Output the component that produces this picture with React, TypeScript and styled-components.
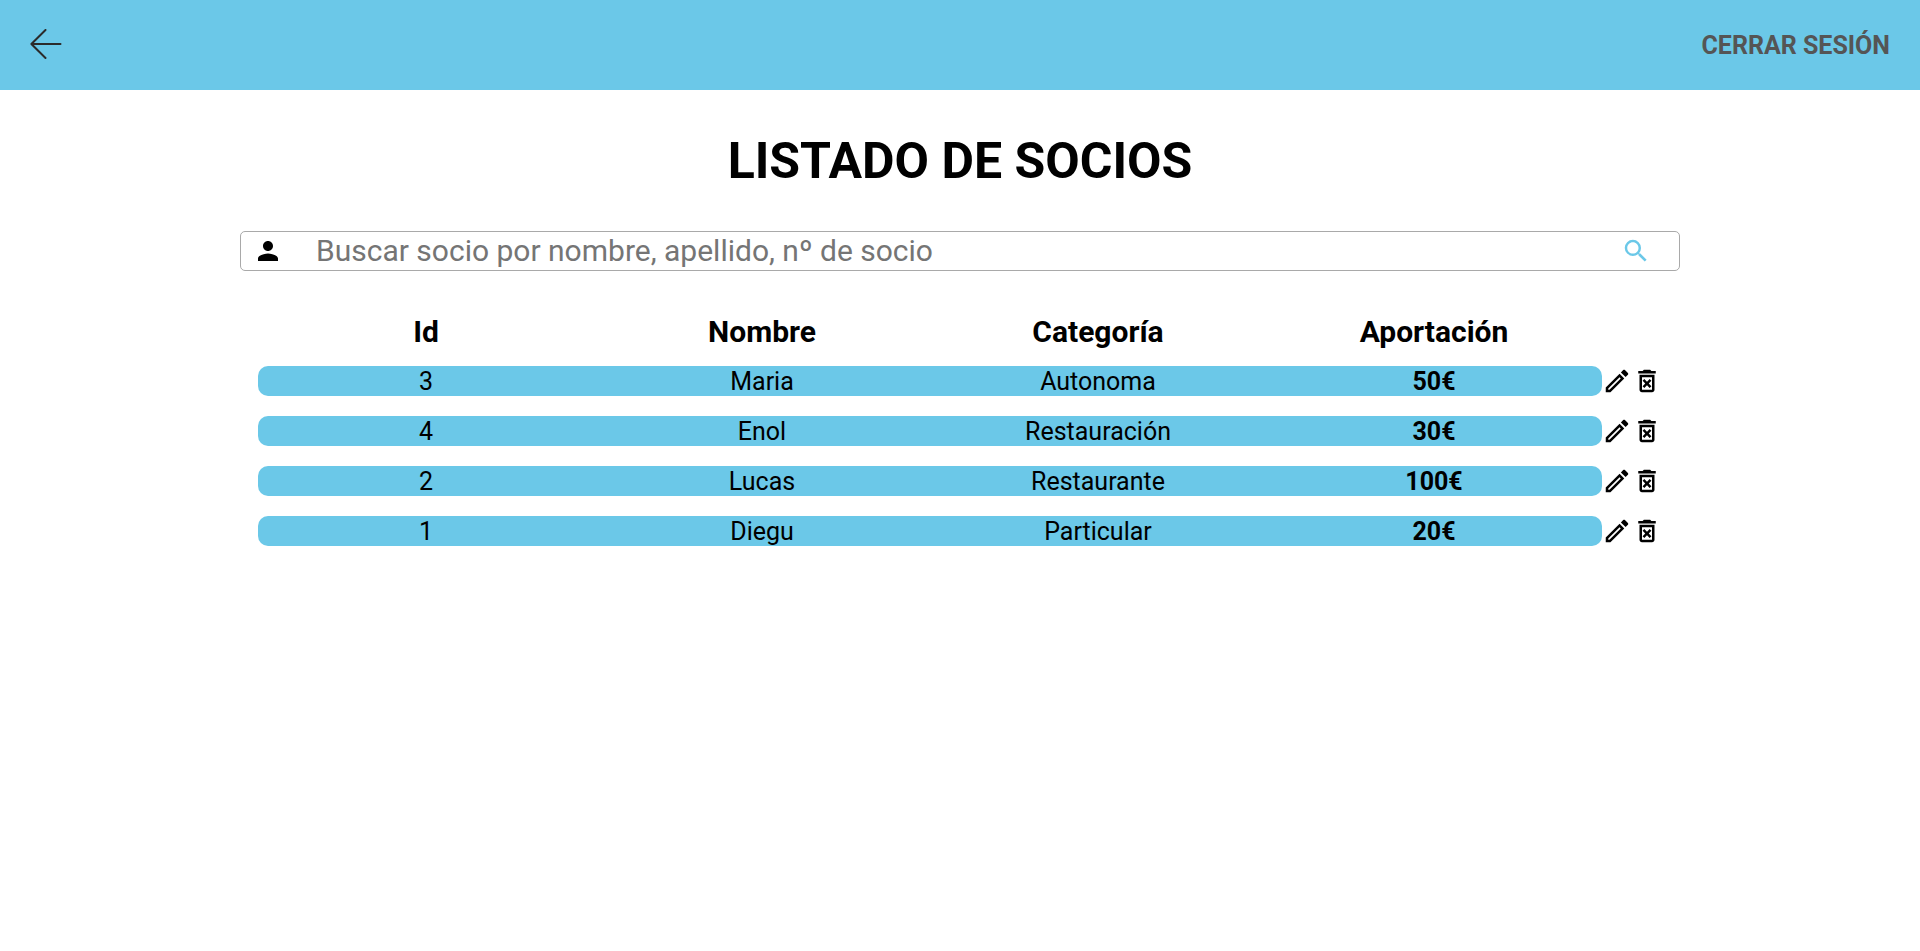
import React from "react";
import styled, { createGlobalStyle } from "styled-components";
import { MdOutlineDeleteForever, MdOutlineEdit, MdPerson, MdSearch } from "react-icons/md";

const BLUE = "#6bc8e8";

const GlobalStyle = createGlobalStyle`
  * { box-sizing: border-box; }
  body {
    margin: 0;
    background: #fff;
    color: #000;
    font-family: Roboto, sans-serif;
  }
`;

const Header = styled.header`
  display: flex;
  align-items: center;
  justify-content: space-between;
  height: 90px;
  padding: 0 30px;
  background: ${BLUE};
`;

const IconButton = styled.button<{ $color?: string }>`
  display: flex;
  align-items: center;
  justify-content: center;
  padding: 0;
  border: 0;
  background: none;
  color: ${({ $color }) => $color ?? "#000"};
  cursor: pointer;
`;

const LogoutButton = styled.button`
  padding: 2px 0 0;
  border: 0;
  background: none;
  color: #555;
  font: bold 25px/30px Roboto, sans-serif;
  cursor: pointer;
`;

const Main = styled.main`
  width: 75%;
  margin: 0 auto;
`;

const Title = styled.h1`
  margin: 0;
  padding: 41px 0 40px;
  font-size: 50px;
  line-height: 60px;
  text-align: center;
`;

const SearchBox = styled.form`
  display: flex;
  align-items: center;
  height: 40px;
  padding: 0 28px 0 12px;
  border: 1px solid #a9a9a9;
  border-radius: 5px;
`;

const SearchLabel = styled.label`
  display: flex;
  margin-right: 33px;
`;

const SearchInput = styled.input`
  flex: 1;
  min-width: 0;
  height: 36px;
  padding: 0;
  border: 0;
  outline: 0;
  background: none;
  font: 30px/36px Roboto, sans-serif;

  &::placeholder {
    color: #757575;
    opacity: 1;
  }
`;

const TableArea = styled.div`
  padding: 25px 18px;
`;

const Table = styled.table`
  width: 100%;
  table-layout: fixed;
  border-collapse: separate;
  border-spacing: 0 20px;
  text-align: center;
`;

const HeadCell = styled.th`
  padding: 2px 0 0;
  font-size: 30px;
  line-height: 28px;
`;

const ActionsHead = styled.td`
  width: 60px;
  padding: 0;
`;

const Cell = styled.td<{ $strong?: boolean }>`
  padding: 1px 0 0;
  background: ${BLUE};
  font-size: 25px;
  font-weight: ${({ $strong }) => ($strong ? "bold" : "normal")};
  line-height: 29px;

  &:first-child {
    border-radius: 10px 0 0 10px;
  }

  &:nth-child(4) {
    border-radius: 0 10px 10px 0;
  }
`;

const ActionsCell = styled.td`
  padding: 0;
`;

const Actions = styled.div`
  display: flex;
`;

const socios = [
  { id: 3, nombre: "Maria", categoria: "Autonoma", aportacion: 50 },
  { id: 4, nombre: "Enol", categoria: "Restauración", aportacion: 30 },
  { id: 2, nombre: "Lucas", categoria: "Restaurante", aportacion: 100 },
  { id: 1, nombre: "Diegu", categoria: "Particular", aportacion: 20 },
];

const ArrowLeft = () => (
  <svg width="32" height="32" viewBox="0 0 32 32" fill="none" stroke="#2b2b2b" strokeWidth="2" strokeLinecap="round" strokeLinejoin="round">
    <path d="M30.5 15H2M15.5 1 1.4 15l14.1 14" />
  </svg>
);

export default function App() {
  return (
    <>
      <GlobalStyle />
      <Header>
        <IconButton type="button" aria-label="Volver">
          <ArrowLeft />
        </IconButton>
        <LogoutButton type="button">CERRAR SESIÓN</LogoutButton>
      </Header>
      <Main>
        <Title>LISTADO DE SOCIOS</Title>
        <SearchBox role="search" onSubmit={(e) => e.preventDefault()}>
          <SearchLabel htmlFor="buscar" aria-label="Buscar socio">
            <MdPerson size={30} />
          </SearchLabel>
          <SearchInput id="buscar" type="text" placeholder="Buscar socio por nombre, apellido, nº de socio" />
          <IconButton type="submit" aria-label="Buscar" $color={BLUE}>
            <MdSearch size={30} />
          </IconButton>
        </SearchBox>
        <TableArea>
          <Table>
            <thead>
              <tr>
                <HeadCell scope="col">Id</HeadCell>
                <HeadCell scope="col">Nombre</HeadCell>
                <HeadCell scope="col">Categoría</HeadCell>
                <HeadCell scope="col">Aportación</HeadCell>
                <ActionsHead />
              </tr>
            </thead>
            <tbody>
              {socios.map((s) => (
                <tr key={s.id}>
                  <Cell>{s.id}</Cell>
                  <Cell>{s.nombre}</Cell>
                  <Cell>{s.categoria}</Cell>
                  <Cell $strong>{s.aportacion}€</Cell>
                  <ActionsCell>
                    <Actions>
                      <IconButton type="button" aria-label={`Editar ${s.nombre}`}>
                        <MdOutlineEdit size={30} />
                      </IconButton>
                      <IconButton type="button" aria-label={`Eliminar ${s.nombre}`}>
                        <MdOutlineDeleteForever size={30} />
                      </IconButton>
                    </Actions>
                  </ActionsCell>
                </tr>
              ))}
            </tbody>
          </Table>
        </TableArea>
      </Main>
    </>
  );
}
